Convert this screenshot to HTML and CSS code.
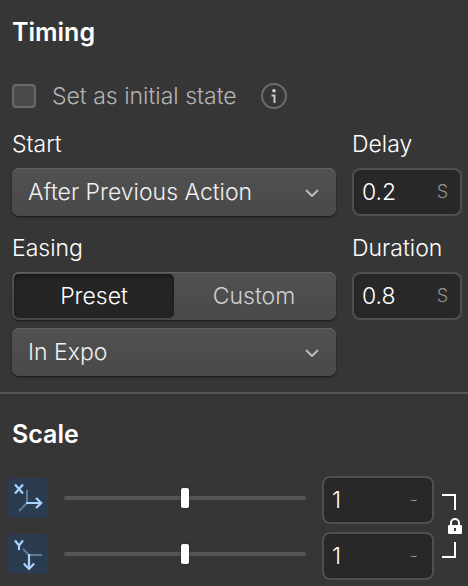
FILE: index.html
```html
<!DOCTYPE html>
<html lang="en">
<head>
    <meta charset="UTF-8">
    <meta name="viewport" content="width=device-width, initial-scale=1.0">
    <title>Timing</title>
    <link rel="stylesheet" href="styles.css">
</head>
<body>
    <!-- Timing -->
    <section class="timing">
        <h2>Timing</h2>

        <div class="initial-state">
            <input type="checkbox" id="initialState">
            <label for="initialState">Set as initial state</label>
            <button class="info" type="button" aria-label="More info">
                <svg width="26" height="26" viewBox="0 0 26 26" fill="none">
                    <circle cx="13" cy="13" r="12" stroke="#6c6c6c" stroke-width="2"/>
                    <circle cx="13" cy="7.7" r="1.8" fill="#d6d6d6"/>
                    <path d="M10.5 12.5h3V20" stroke="#c8c8c8" stroke-width="2"/>
                </svg>
            </button>
        </div>

        <div class="fields">
            <div class="field">
                <label for="start">Start</label>
                <div class="select">
                    <select id="start">
                        <option>After Previous Action</option>
                        <option>With Previous Action</option>
                    </select>
                    <svg class="chevron" width="14" height="8" viewBox="0 0 14 8"><path d="M1 1l6 6 6-6"/></svg>
                </div>
            </div>

            <div class="field">
                <label for="delay">Delay</label>
                <div class="number">
                    <input type="text" id="delay" value="0.2">
                    <span class="unit">S</span>
                </div>
            </div>

            <div class="field">
                <label for="easing">Easing</label>
                <div class="segmented">
                    <button type="button" class="active" aria-pressed="true">Preset</button>
                    <button type="button" aria-pressed="false">Custom</button>
                </div>
                <div class="select">
                    <select id="easing">
                        <option>In Expo</option>
                        <option>Out Expo</option>
                    </select>
                    <svg class="chevron" width="14" height="8" viewBox="0 0 14 8"><path d="M1 1l6 6 6-6"/></svg>
                </div>
            </div>

            <div class="field">
                <label for="duration">Duration</label>
                <div class="number">
                    <input type="text" id="duration" value="0.8">
                    <span class="unit">S</span>
                </div>
            </div>
        </div>
    </section>

    <!-- Scale -->
    <section class="scale">
        <h2>Scale</h2>

        <div class="scale-body">
            <div class="axes">
                <div class="axis">
                    <svg class="axis-icon" viewBox="0 0 40 40" fill="none">
                        <path d="M19 12v13l-8 8" stroke="#61799a" stroke-width="2"/>
                        <path d="M7 6.5l8 9M15 6.5l-8 9" stroke="#a9d2ff" stroke-width="2.2"/>
                        <path d="M18 25h15M28 20l5.2 5-5.2 5" stroke="#a9d2ff" stroke-width="2.2"/>
                    </svg>
                    <input type="range" min="0" max="2" step="0.01" value="1" aria-label="X scale slider">
                    <div class="number">
                        <input type="text" value="1" aria-label="X scale">
                        <span class="unit">-</span>
                    </div>
                </div>

                <div class="axis">
                    <svg class="axis-icon" viewBox="0 0 40 40" fill="none">
                        <path d="M15 15l6 6h13" stroke="#61799a" stroke-width="2"/>
                        <path d="M7 6.5l4 5 4-5M11 11v5" stroke="#a9d2ff" stroke-width="2.2"/>
                        <path d="M21 20v15M15.8 29.5L21 35l5.2-5.5" stroke="#a9d2ff" stroke-width="2.2"/>
                    </svg>
                    <input type="range" min="0" max="2" step="0.01" value="1" aria-label="Y scale slider">
                    <div class="number">
                        <input type="text" value="1" aria-label="Y scale">
                        <span class="unit">-</span>
                    </div>
                </div>
            </div>

            <button class="lock" type="button" aria-label="Lock proportions">
                <svg width="20" height="64" viewBox="0 0 20 64" fill="none">
                    <path d="M0 1h13v15M0 63h13V48" stroke="#fff" stroke-width="2"/>
                    <path d="M9 33v-4a4 4 0 0 1 8 0v4" stroke="#fff" stroke-width="2"/>
                    <rect x="6" y="31" width="14" height="9" rx="1" fill="#fff"/>
                    <rect x="12" y="34" width="2" height="3" fill="#363636"/>
                </svg>
            </button>
        </div>
    </section>
</body>
</html>
```
FILE: styles.css
```css
:root {
    --bg: #363636;
    --field-bg: #282828;
    --line: #4f4f4f;
    --text: #ffffff;
    --control: linear-gradient(#515151, #494949);
    --control-shadow: inset 0 1px 0 #626262, 0 1px 2px #161616;
}

* {
    box-sizing: border-box;
}

body {
    margin: 0;
    background-color: var(--bg);
    color: var(--text);
    font-family: Inter, "Liberation Sans", sans-serif;
    font-size: 23px;
    font-weight: 300;
    line-height: 32px;
}

h2 {
    margin: 0;
    font-size: 25px;
    font-weight: 600;
    line-height: 32px;
}

input,
select,
button {
    margin: 0;
    border: none;
    font: inherit;
    color: inherit;
}

button {
    padding: 0;
    background: none;
    cursor: pointer;
}

.timing {
    padding: 16px 6px 16px 12px;
    border-bottom: 2px solid #555555;
}

/* Checkbox row */
.initial-state {
    display: flex;
    align-items: center;
    margin: 32px 0 16px;
    color: #b4b4b4;
}

.initial-state input {
    appearance: none;
    width: 24px;
    height: 24px;
    margin-right: 16px;
    border: 2px solid #6a6a6a;
    border-radius: 4px;
    background-color: #4b4b4b;
}

.info {
    display: flex;
    margin-left: 24px;
}

/* Start, delay, easing, duration */
.fields {
    display: grid;
    grid-template-columns: 1fr 110px;
    gap: 16px;
}

.field {
    display: flex;
    flex-direction: column;
    gap: 8px;
}

.select {
    position: relative;
}

.select select {
    appearance: none;
    display: block;
    width: 100%;
    height: 48px;
    padding: 0 48px 0 16px;
    border-radius: 7px;
    background: var(--control);
    box-shadow: var(--control-shadow);
    color: #f0f0f0;
}

.chevron {
    position: absolute;
    top: 21px;
    right: 17px;
    fill: none;
    stroke: #bcbcbc;
    stroke-width: 2;
    pointer-events: none;
}

.number {
    display: flex;
    align-items: center;
    height: 48px;
    padding: 0 12px 0 8px;
    border: 2px solid var(--line);
    border-radius: 8px;
    background-color: var(--field-bg);
}

.number input {
    flex: 1;
    min-width: 0;
    padding: 0;
    background: none;
}

.unit {
    color: #909090;
    font-size: 18px;
}

.segmented {
    display: grid;
    grid-template-columns: 1fr 1fr;
    height: 48px;
    padding: 2px;
    border-radius: 7px;
    background: var(--control);
    box-shadow: var(--control-shadow);
    color: #d0d0d0;
}

.segmented .active {
    border-radius: 5px;
    background-color: #252525;
    box-shadow: inset 0 2px 4px #181818;
    color: var(--text);
}

/* Scale */
.scale {
    padding: 24px 6px 6px 8px;
}

.scale h2 {
    margin: 0 0 26px 4px;
}

.scale-body {
    display: flex;
    gap: 8px;
}

.axes {
    flex: 1;
    display: flex;
    flex-direction: column;
    gap: 8px;
}

.axis {
    display: grid;
    grid-template-columns: 40px 1fr 112px;
    column-gap: 16px;
}

.axis-icon {
    width: 40px;
    height: 40px;
    margin-top: 2px;
    border-radius: 4px;
    background-color: #2c3c50;
}

.axis .number {
    padding-right: 14px;
}

.axis input[type="range"] {
    appearance: none;
    width: 100%;
    height: 20px;
    margin-top: 12px;
    background: none;
}

.axis input[type="range"]::-webkit-slider-runnable-track {
    height: 4px;
    border-radius: 2px;
    background-color: #555555;
}

.axis input[type="range"]::-webkit-slider-thumb {
    appearance: none;
    width: 8px;
    height: 20px;
    margin-top: -8px;
    border-radius: 2px;
    background-color: #ffffff;
    box-shadow: 0 0 2px #1c1c1c;
}

.lock {
    display: flex;
    align-self: flex-start;
    margin-top: 18px;
}
```
